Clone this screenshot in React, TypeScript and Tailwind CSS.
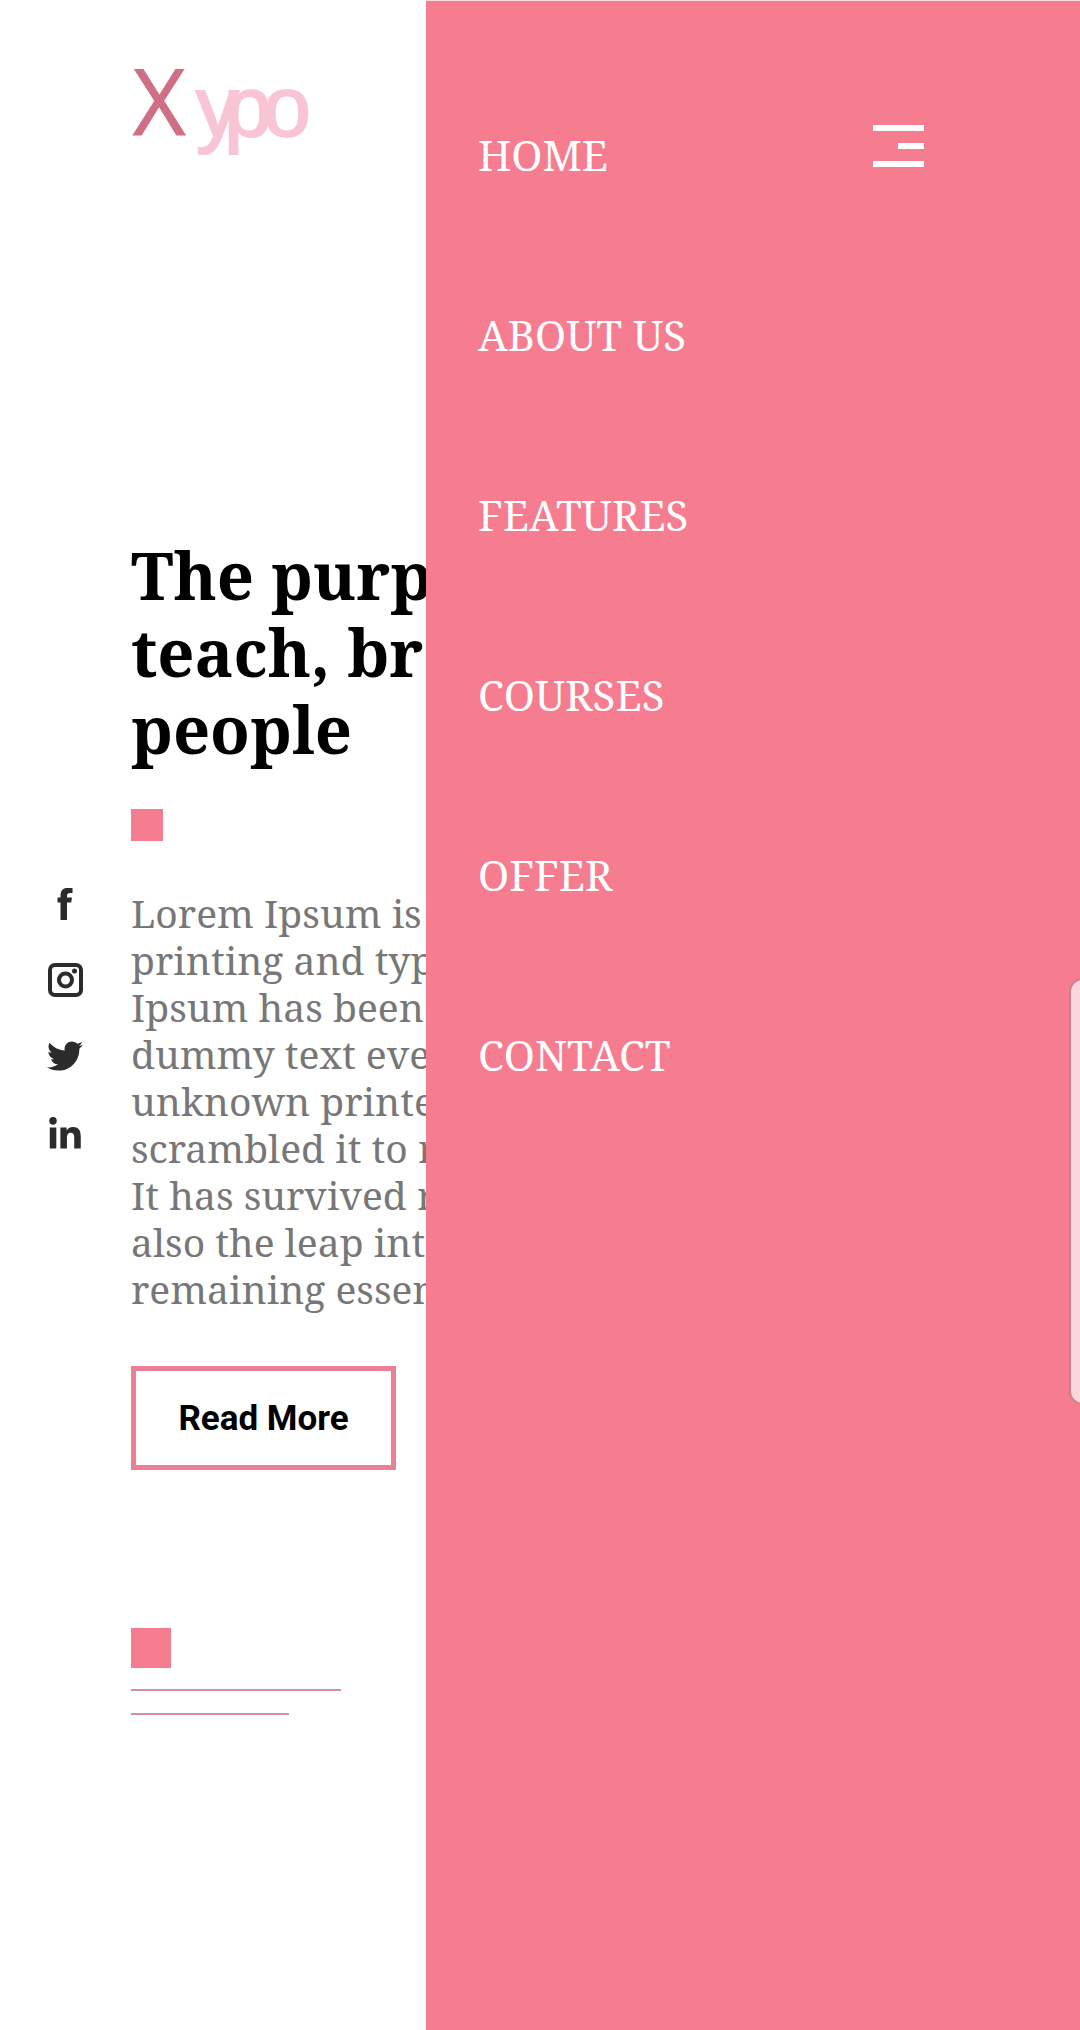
import React from "react";
import { FaLinkedinIn, FaTwitter } from "react-icons/fa";

const menu = ["HOME", "ABOUT US", "FEATURES", "COURSES", "OFFER", "CONTACT"];

const heading = ["The purp", "teach, br", "people"];

const body = [
  "Lorem Ipsum is",
  "printing and typ",
  "Ipsum has been",
  "dummy text eve",
  "unknown printe",
  "scrambled it to r",
  "It has survived r",
  "also the leap int",
  "remaining essen",
];

function Logo() {
  return (
    <svg
      role="img"
      aria-label="Xypo"
      viewBox="0 0 180 104"
      className="block h-[104px] w-[180px]"
    >
      <text
        x="2"
        y="75"
        fontSize="91"
        fill="#cf6f86"
        stroke="#cf6f86"
        strokeWidth="1"
        fontFamily="'Open Sans', sans-serif"
      >
        X
      </text>
      <text
        x="65 93 132"
        y="76"
        fontSize="86"
        fill="#f9c5d5"
        stroke="#f9c5d5"
        strokeWidth="2"
        fontFamily="'Liberation Sans', sans-serif"
      >
        ypo
      </text>
    </svg>
  );
}

function FacebookIcon() {
  return (
    <svg viewBox="0 0 36 36" className="size-9" fill="currentColor" aria-hidden="true">
      <path d="M13.500 34V16.500H10.500v-5h3V10C13.500 4.500 16 2 20.500 2H25.500v5H23C21 7 20 8 20 10v1.500h5l-.8 5H20V34z" />
    </svg>
  );
}

function InstagramIcon() {
  return (
    <svg viewBox="0 0 36 36" className="size-9" fill="none" stroke="currentColor" aria-hidden="true">
      <rect x="3" y="3" width="31" height="30" rx="5" strokeWidth="4" />
      <circle cx="18.500" cy="18" r="6.500" strokeWidth="4" />
      <circle cx="27.500" cy="9" r="2.500" fill="currentColor" stroke="none" />
    </svg>
  );
}

const socials = [
  { name: "Facebook", icon: <FacebookIcon /> },
  { name: "Instagram", icon: <InstagramIcon /> },
  { name: "Twitter", icon: <FaTwitter className="size-9" /> },
  { name: "LinkedIn", icon: <FaLinkedinIn viewBox="0 -44 448 512" className="size-9" /> },
];

export default function App() {
  return (
    <div className="relative flex min-h-screen overflow-hidden bg-white font-['Noto_Serif','DejaVu_Serif',serif]">
      <main className="flex w-[426px] shrink-0 overflow-hidden">
        <aside className="flex w-[131px] shrink-0 flex-col gap-10 pt-[886px] pl-[47px] text-[#2b2b2b]">
          {socials.map((s) => (
            <a key={s.name} href="#" aria-label={s.name} className="block size-9">
              {s.icon}
            </a>
          ))}
        </aside>

        <div className="flex flex-col items-start pt-[60px]">
          <Logo />
          <h1 className="mt-[373px] text-[65px] leading-[77px] font-bold whitespace-nowrap text-black">
            {heading.map((line) => (
              <span key={line} className="block">
                {line}
              </span>
            ))}
          </h1>
          <div className="mt-[41px] size-8 bg-[#f67c90]" />
          <p className="mt-12 text-[39px] leading-[47px] whitespace-nowrap text-[#777777]">
            {body.map((line) => (
              <span key={line} className="block">
                {line}
              </span>
            ))}
          </p>
          <button
            type="button"
            className="mt-[54px] h-[104px] w-[265px] border-[5px] border-[#e98096] bg-white pt-0.5 font-['Roboto',sans-serif] text-[35px] font-bold text-black"
          >
            Read More
          </button>
          <div className="mt-[158px] size-10 bg-[#f67c90]" />
          <div className="mt-[21px] h-0.5 w-[210px] bg-[#d98ea0]" />
          <div className="mt-[22px] h-0.5 w-[158px] bg-[#d98ea0]" />
        </div>
      </main>

      <div className="flex flex-1 items-start justify-between border-t border-[#fbdde3] bg-[#f67c90] pr-[156px] pl-[52px]">
        <nav className="flex flex-col gap-[120px] pt-[124px]">
          {menu.map((item) => (
            <a key={item} href="#" className="text-[42px] leading-[60px] whitespace-nowrap text-white">
              {item}
            </a>
          ))}
        </nav>
        <button
          type="button"
          aria-label="Close menu"
          className="mt-[124px] flex w-[51px] flex-col items-end gap-3"
        >
          <span className="block h-1.5 w-full bg-white" />
          <span className="block h-1.5 w-[26px] bg-white" />
          <span className="block h-1.5 w-full bg-white" />
        </button>
      </div>

      <div className="absolute top-[978px] -right-5 h-[427px] w-[31px] rounded-[14px] border-2 border-[#d07f8d] bg-[#fcd6dd]" />
    </div>
  );
}
